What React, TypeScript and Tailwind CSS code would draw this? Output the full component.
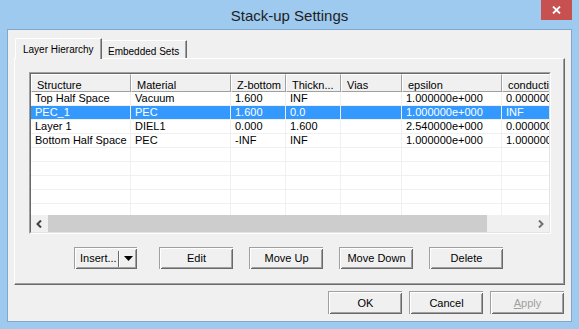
import React from 'react';

const FONT = { fontFamily: '"Liberation Sans", Arial, sans-serif' };

const columns = [
  { name: 'Structure', cls: 'w-[100px]' },
  { name: 'Material', cls: 'w-[100px]' },
  { name: 'Z-bottom', cls: 'w-[55px]' },
  { name: 'Thickn...', cls: 'w-[55px]' },
  { name: 'Vias', cls: 'w-[61px]' },
  { name: 'epsilon', cls: 'w-[100px]' },
  { name: 'conductivity', cls: 'w-[100px]' },
];

const rows = [
  ['Top Half Space', 'Vacuum', '1.600', 'INF', '', '1.000000e+000', '0.000000e+000'],
  ['PEC_1', 'PEC', '1.600', '0.0', '', '1.000000e+000', 'INF'],
  ['Layer 1', 'DIEL1', '0.000', '1.600', '', '2.540000e+000', '0.000000e+000'],
  ['Bottom Half Space', 'PEC', '-INF', 'INF', '', '1.000000e+000', '1.000000e+000'],
  ['', '', '', '', '', '', ''],
  ['', '', '', '', '', '', ''],
  ['', '', '', '', '', '', ''],
  ['', '', '', '', '', '', ''],
  ['', '', '', '', '', '', ''],
];

const raised =
  'shadow-[inset_1px_1px_0_#ffffff,inset_-1px_-1px_0_#696969,inset_2px_2px_0_#f0f0f0,inset_-2px_-2px_0_#a0a0a0]';

const Btn = ({ children, className = '' }: { children: React.ReactNode; className?: string }) => (
  <div className={`flex items-center justify-center bg-[#f0f0f0] border-t border-l border-[#a0a0a0] text-[11px] ${raised} ${className}`}>
    {children}
  </div>
);

export default function App() {
  return (
    <div className="relative w-[579px] h-[329px] bg-[#9dcaee] flex flex-col overflow-hidden text-black" style={FONT}>
      {/* title bar */}
      <div className="h-[29px] flex items-center justify-center pt-[3px] text-[15px] text-[#1e1e1e]">
        Stack-up Settings
      </div>
      <div className="absolute top-0 right-[7px] w-[31px] h-[20px] bg-[#c75050] flex items-center justify-center">
        <svg width="9" height="8" viewBox="0 0 9 8">
          <path d="M1 0.5 L8 7.5 M8 0.5 L1 7.5" stroke="#fff" strokeWidth="1.8" />
        </svg>
      </div>

      {/* client */}
      <div className="flex-1 mx-[7px] mb-[7px] border border-[#82a7cb] bg-[#f0f0f0] flex flex-col">
        <div className="mt-[8px] mx-[6px] flex flex-col">
          {/* tabs */}
          <div className="flex items-end h-[20px] relative z-10">
            <div className="h-[21px] -mb-px ml-px w-[87px] bg-[#f0f0f0] border-t border-l border-white shadow-[inset_-1px_0_0_#a0a0a0] border-r border-r-[#696969] text-[10px] pl-[7px] pt-[3px] rounded-tl-[2px] whitespace-nowrap">
              Layer Hierarchy
            </div>
            <div className="h-[18px] w-[85px] border-t border-white shadow-[inset_-1px_0_0_#a0a0a0] border-r border-r-[#696969] text-[10px] pl-[6px] pt-[3px] whitespace-nowrap">
              Embedded Sets
            </div>
          </div>

          {/* panel */}
          <div className="h-[227px] border-t border-l border-white border-r border-b border-r-[#696969] border-b-[#696969] shadow-[inset_-1px_-1px_0_#a0a0a0] flex flex-col">
            {/* list */}
            <div className="mt-[13px] ml-[14px] w-[522px] h-[162px] border border-t-[#a0a0a0] border-l-[#a0a0a0] border-r-white border-b-white">
              <div className="w-full h-full border border-t-[#696969] border-l-[#696969] border-r-[#e3e3e3] border-b-[#e3e3e3] bg-white flex flex-col overflow-hidden">
                {/* header */}
                <div className="flex h-[18px] shrink-0">
                  {columns.map((c) => (
                    <div
                      key={c.name}
                      className={`${c.cls} shrink-0 h-full bg-[#f0f0f0] border-t border-l border-white border-r border-r-[#a0a0a0] border-b border-b-[#a0a0a0] text-[11px] pl-[5px] pt-[2px] whitespace-nowrap overflow-hidden`}
                    >
                      {c.name}
                    </div>
                  ))}
                </div>
                {/* rows */}
                <div className="flex-1 overflow-hidden">
                  {rows.map((r, i) => (
                    <div key={i} className={`flex h-[14px] ${i === 1 ? 'bg-[#3399ff] text-white' : 'text-black'}`}>
                      {r.map((cell, j) => (
                        <div
                          key={j}
                          className={`${columns[j].cls} shrink-0 h-full border-r border-b border-[#f0f0f0] text-[11px] leading-[13px] pl-[4px] whitespace-nowrap overflow-hidden`}
                        >
                          {cell}
                        </div>
                      ))}
                    </div>
                  ))}
                </div>
                {/* horizontal scrollbar */}
                <div className="h-[17px] shrink-0 flex bg-[#f0f0f0]">
                  <div className="w-[17px] flex items-center justify-center">
                    <svg width="7" height="8" viewBox="0 0 7 8">
                      <path d="M5 0.5 L1.5 4 L5 7.5" stroke="#404040" strokeWidth="2" fill="none" />
                    </svg>
                  </div>
                  <div className="flex-1 flex items-center">
                    <div className="w-[439px] h-full bg-[#cdcdcd]" />
                  </div>
                  <div className="w-[17px] flex items-center justify-center">
                    <svg width="7" height="8" viewBox="0 0 7 8">
                      <path d="M2 0.5 L5.5 4 L2 7.5" stroke="#707070" strokeWidth="2" fill="none" />
                    </svg>
                  </div>
                </div>
              </div>
            </div>

            {/* action buttons */}
            <div className="flex mt-[13px] ml-[59px]">
              <Btn className="w-[63px] h-[22px] justify-start">
                <span className="pl-[5px] w-[43px]">Insert...</span>
                <span className="w-px h-[16px] bg-[#696969] shadow-[1px_0_0_#ffffff]" />
                <span className="flex-1 flex justify-center">
                  <svg width="9" height="5" viewBox="0 0 9 5">
                    <path d="M0 0 H9 L4.5 5 Z" fill="#000" />
                  </svg>
                </span>
              </Btn>
              <Btn className="w-[74px] h-[22px] ml-[22px]">Edit</Btn>
              <Btn className="w-[74px] h-[22px] ml-[16px]">Move Up</Btn>
              <Btn className="w-[74px] h-[22px] ml-[16px]">Move Down</Btn>
              <Btn className="w-[74px] h-[22px] ml-[16px]">Delete</Btn>
            </div>
          </div>
        </div>

        {/* dialog buttons */}
        <div className="flex justify-end gap-[7px] mt-[6px] mr-[7px]">
          <Btn className="w-[74px] h-[23px]">OK</Btn>
          <Btn className="w-[74px] h-[23px]">Cancel</Btn>
          <Btn className="w-[74px] h-[23px] text-[#a0a0a0]">
            <span>
              <span className="underline">A</span>pply
            </span>
          </Btn>
        </div>
      </div>
    </div>
  );
}
